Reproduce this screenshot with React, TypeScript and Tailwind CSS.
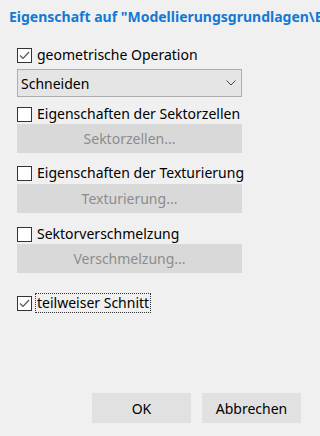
import type { ReactNode } from "react";

const font = { fontFamily: '"Noto Sans", "Liberation Sans", sans-serif' };

function CheckBox({ checked, label, focused }: { checked?: boolean; label: string; focused?: boolean }) {
  return (
    <div className="flex h-[20px] items-center">
      <span className="flex h-[15px] w-[15px] shrink-0 items-center justify-center border border-[#333333] bg-white">
        {checked && (
          <svg width="11" height="9" viewBox="0 0 11 9" fill="none">
            <path d="M1 4.5 L4 7.5 L10 1" stroke="#555555" strokeWidth="1.2" />
          </svg>
        )}
      </span>
      <span
        className={
          focused
            ? "ml-[3px] border border-dotted border-[#333333] pl-[1px] pr-[1px] leading-[18px]"
            : "ml-[5px] leading-[20px]"
        }
      >
        {label}
      </span>
    </div>
  );
}

function GreyButton({ children }: { children: ReactNode }) {
  return (
    <div className="flex h-[29px] w-[225px] items-center justify-center bg-[#d9d9d9] text-[#8c8c8c]">
      {children}
    </div>
  );
}

export default function App() {
  return (
    <div
      className="flex h-[436px] w-[320px] flex-col overflow-hidden bg-[#f0f0f0] text-[14px] text-black"
      style={font}
    >
      <div className="overflow-hidden whitespace-nowrap pl-[9px] pt-[7px] text-[14px] font-bold leading-[20px] text-[#1479d4]">
        Eigenschaft auf "Modellierungsgrundlagen\Eigenschaften"
      </div>

      <div className="pl-[17px]">
        <div className="mt-[18px]">
          <CheckBox checked label="geometrische Operation" />
        </div>
        <div className="mt-[4px] flex h-[28px] w-[225px] items-center justify-between border border-[#adadad] bg-[#e5e5e5] pl-[3px] pr-[5px]">
          <span>Schneiden</span>
          <svg width="10" height="6" viewBox="0 0 10 6" fill="none">
            <path d="M0.5 0.5 L5 5 L9.5 0.5" stroke="#444444" strokeWidth="1" />
          </svg>
        </div>

        <div className="mt-[7px]">
          <CheckBox label="Eigenschaften der Sektorzellen" />
        </div>
        <GreyButton>Sektorzellen...</GreyButton>

        <div className="mt-[10px]">
          <CheckBox label="Eigenschaften der Texturierung" />
        </div>
        <div className="mt-[1px]">
          <GreyButton>Texturierung...</GreyButton>
        </div>

        <div className="mt-[11px]">
          <CheckBox label="Sektorverschmelzung" />
        </div>
        <GreyButton>Verschmelzung...</GreyButton>

        <div className="mt-[20px]">
          <CheckBox checked focused label="teilweiser Schnitt" />
        </div>
      </div>

      <div className="mt-auto flex justify-end gap-[11px] pb-[13px] pr-[19px]">
        <div className="flex h-[30px] w-[99px] items-center justify-center bg-[#e1e1e1]">OK</div>
        <div className="flex h-[30px] w-[99px] items-center justify-center bg-[#e1e1e1]">Abbrechen</div>
      </div>
    </div>
  );
}
